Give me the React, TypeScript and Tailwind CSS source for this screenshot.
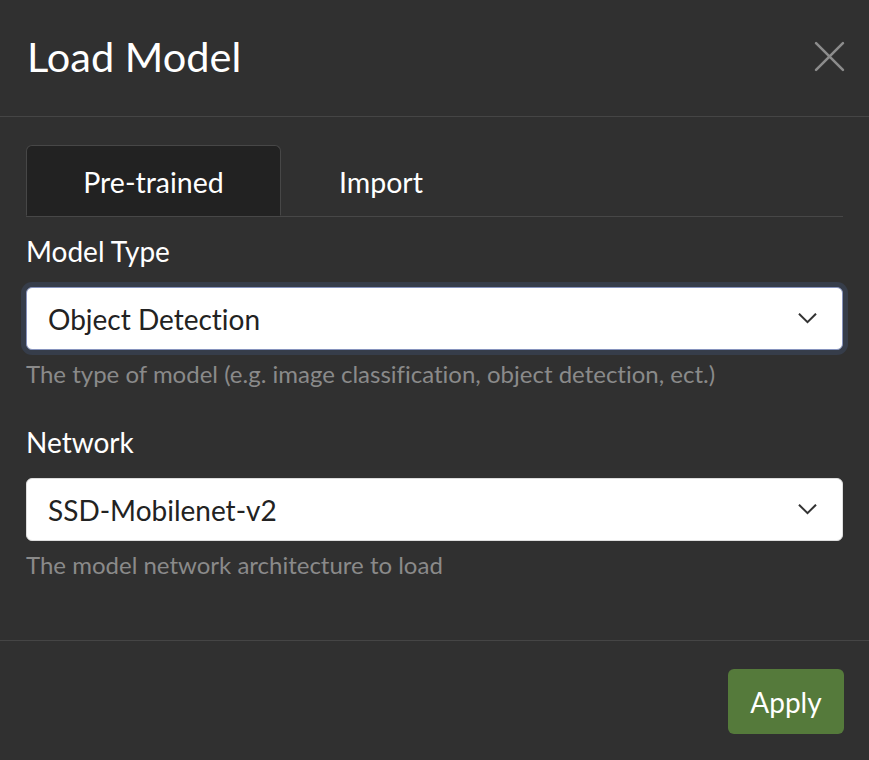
import React from "react";

function Chevron() {
  return (
    <svg className="w-[19px] h-[11px] text-[#333]" fill="none" stroke="currentColor" viewBox="0 0 20 12">
      <path strokeLinecap="square" strokeWidth={2.2} d="M1.5 1.5l8.5 8.5 8.5-8.5" />
    </svg>
  );
}

function SelectField({
  label,
  value,
  help,
  focused,
}: {
  label: string;
  value: string;
  help: string;
  focused?: boolean;
}) {
  return (
    <div className="flex flex-col">
      <label className="text-[28px] leading-[32px] text-white mb-[20px]">{label}</label>
      <div
        className={
          focused
            ? "h-[63px] rounded-md bg-white border border-[#8693bd] ring-[5px] ring-[#363d4a] flex items-center justify-between pl-[21px] pr-[25px]"
            : "h-[63px] rounded-md bg-white border border-[#ddd] flex items-center justify-between pl-[21px] pr-[25px]"
        }
      >
        <span className="text-[28px] text-[#222]">{value}</span>
        <Chevron />
      </div>
      <p className="text-[24px] leading-[30px] text-[#8a8a8a] mt-[9px]">{help}</p>
    </div>
  );
}

export default function App() {
  return (
    <div className="w-[869px] h-[760px] bg-[#303030] flex flex-col font-['Lato',sans-serif] [font-variant-ligatures:none]">
      <div className="h-[117px] flex items-center justify-between pl-[27px] pr-[24px] pb-[3px] border-b border-[#454545]">
        <h1 className="text-[41.5px] text-white">Load Model</h1>
        <svg className="w-[31px] h-[31px] text-[#8c8c8c]" fill="none" stroke="currentColor" viewBox="0 0 30 30">
          <path strokeLinecap="round" strokeWidth={2.5} d="M2 2l26 26M28 2L2 28" />
        </svg>
      </div>

      <div className="flex-1 px-[26px] pt-[28px]">
        <div className="flex border-b border-[#474747]">
          <div className="w-[255px] h-[71px] -mb-px pt-1 bg-[#222] border border-[#474747] border-b-[#222] rounded-t-md flex items-center justify-center text-[28.5px] text-white">
            Pre-trained
          </div>
          <div className="w-[200px] h-[71px] pt-1 flex items-center justify-center text-[28.5px] text-white">
            Import
          </div>
        </div>

        <div className="flex flex-col gap-[37px] pt-[18px]">
          <SelectField
            label="Model Type"
            value="Object Detection"
            help="The type of model (e.g. image classification, object detection, ect.)"
            focused
          />
          <SelectField
            label="Network"
            value="SSD-Mobilenet-v2"
            help="The model network architecture to load"
          />
        </div>
      </div>

      <div className="h-[120px] border-t border-[#454545] flex items-start justify-end pr-[25px] pt-[28px]">
        <button className="h-[65px] w-[116px] rounded-md bg-[#557a3b] text-white text-[28px]">Apply</button>
      </div>
    </div>
  );
}
